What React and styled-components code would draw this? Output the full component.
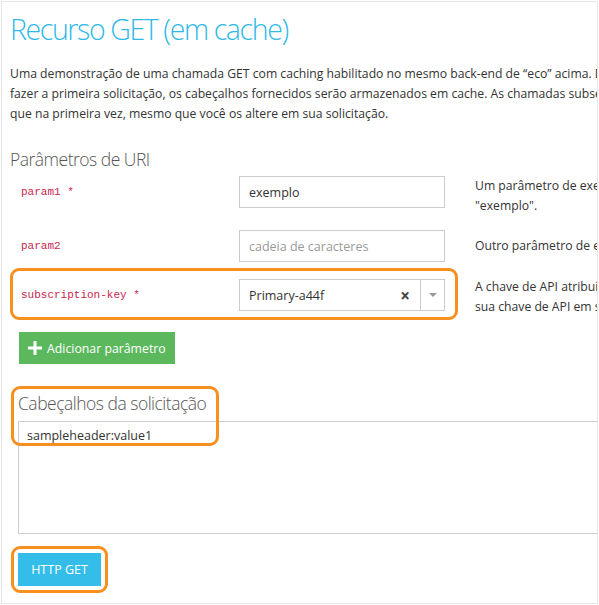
import React from 'react';
import styled, { createGlobalStyle } from 'styled-components';

const GlobalStyle = createGlobalStyle`
  body {
    margin: 0;
    background: #fff;
    font-family: "Segoe UI", "Open Sans", "Noto Sans", sans-serif;
    color: #333;
  }
`

const ORANGE = '#f7901e';

// ----styled components----
const Frame = styled.div` // outer card, content is wider than the shot and gets cut
  box-sizing: border-box;
  margin: 1px 0 0 1px;
  width: 597px;
  height: 603px;
  border: 1px solid #e6e6e6;
  overflow: hidden;
  padding: 0 0 0 8px;
`
const Title = styled.h1`
  margin: 9px 0 0 0;
  font-size: 28.5px;
  font-weight: 300;
  letter-spacing: -1.4px;
  line-height: 36px;
  color: #2fb9e8;
  white-space: nowrap;
`
const Intro = styled.p`
  margin: 17px 0 0 0;
  font-size: 12.2px;
  line-height: 20px;
  color: #333;
  white-space: nowrap;
`
const SectionTitle = styled.h2`
  margin: ${p => p.$top}px 0 0 0;
  font-size: 17.5px;
  font-weight: 300;
  letter-spacing: -0.5px;
  line-height: 26px;
  color: #555;
  white-space: nowrap;
`
const ParamTable = styled.div`
  display: flex;
  flex-direction: column;
  margin-top: 4px;
`
const ParamRow = styled.div`
  position: relative;
  display: flex;
  align-items: flex-start;
  padding-left: 11px;
  margin-top: ${p => p.$top}px;
`
const ParamName = styled.div`
  flex-shrink: 0;
  width: 218px;
  height: 32px;
  display: flex;
  align-items: center;
  font-family: "Liberation Mono", "DejaVu Sans Mono", monospace;
  font-size: 11px;
  color: #c7254e;
  white-space: nowrap;
`
const TextInput = styled.div`
  flex-shrink: 0;
  box-sizing: border-box;
  width: 206px;
  height: 32px;
  border: 1px solid #ccc;
  display: flex;
  align-items: center;
  padding: 0 9px;
  font-size: 12.5px;
  color: ${p => (p.$placeholder ? '#999' : '#333')};
  white-space: nowrap;
`
const SelectBox = styled(TextInput)`
  padding: 0 0 0 9px;
`
const SelectValue = styled.span`
  flex: 1;
`
const ClearMark = styled.span`
  width: 26px;
  text-align: center;
  font-size: 17px;
  font-weight: bold;
  color: #444;
  margin-right: 2px;
`
const ArrowCell = styled.span`
  width: 23px;
  height: 100%;
  border-left: 1px solid #ccc;
  display: flex;
  align-items: center;
  justify-content: center;
  &::after {
    content: '';
    border-left: 4px solid transparent;
    border-right: 4px solid transparent;
    border-top: 4px solid #999;
  }
`
const ParamDesc = styled.div`
  flex-shrink: 0;
  margin-left: 30px;
  margin-top: ${p => p.$shift || 0}px;
  font-size: 12.2px;
  line-height: 20px;
  color: #333;
  white-space: nowrap;
`
// orange annotation rings drawn over the screenshot
const Ring = styled.span`
  position: absolute;
  left: ${p => p.$l}px;
  top: ${p => p.$t}px;
  width: ${p => p.$w}px;
  height: ${p => p.$h}px;
  box-sizing: border-box;
  border: 3px solid ${ORANGE};
  border-radius: 9px;
  pointer-events: none;
`
const AddButton = styled.button`
  margin: 15px 0 0 9px;
  width: 156px;
  height: 32px;
  border: none;
  background: #5cb85c;
  color: #fff;
  font-family: inherit;
  font-size: 12.3px;
  display: flex;
  align-items: center;
  gap: 4px;
  padding: 0 0 0 8px;
  cursor: pointer;
`
const HeadersSection = styled.div`
  position: relative;
  margin-left: 8px;
`
const HeadersArea = styled.div`
  box-sizing: border-box;
  width: 720px;
  height: 113px;
  margin-top: 5px;
  border: 1px solid #ccc;
  padding: 4px 8px;
  font-size: 12.5px;
  line-height: 20px;
  color: #333;
`
const SendWrap = styled.div`
  position: relative;
  width: 83px;
  margin: 19px 0 0 8px;
`
const SendButton = styled.button`
  width: 83px;
  height: 33px;
  border: none;
  background: #35bde9;
  color: #fff;
  font-family: inherit;
  font-size: 12.5px;
  cursor: pointer;
`

const params = [
  { name: 'param1 *', value: 'exemplo', desc: ['Um parâmetro de exemplo obrigatório. O valor padrão é', '"exemplo".'], top: 0 },
  { name: 'param2', placeholder: 'cadeia de caracteres', desc: ['Outro parâmetro de exemplo, definido como opcional.'], top: 14, shift: 6 },
  { name: 'subscription-key *', select: 'Primary-a44f', desc: ['A chave de API atribuída à sua conta. Você pode encontrar', 'sua chave de API em seu perfil.'], top: 17, ring: true, shift: -2 },
];

const PlusIcon = () => (
  <svg width="16" height="16" viewBox="0 0 16 16">
    <path d="M8 1v14M1 8h14" stroke="#fff" strokeWidth="3" />
  </svg>
)

const App = () => {
  return (
    <Frame>
      <GlobalStyle />
      <Title>Recurso GET (em cache)</Title>
      <Intro>
        Uma demonstração de uma chamada GET com caching habilitado no mesmo back-end de “eco” acima. Depois de<br />
        fazer a primeira solicitação, os cabeçalhos fornecidos serão armazenados em cache. As chamadas subsequentes retornarão os mesmos cabeçalhos<br />
        que na primeira vez, mesmo que você os altere em sua solicitação.
      </Intro>

      <SectionTitle $top={22}>Parâmetros de URI</SectionTitle>
      <ParamTable>
        {params.map((p) => (
          <ParamRow key={p.name} $top={p.top}>
            <ParamName>{p.name}</ParamName>
            {p.select ? (
              <SelectBox>
                <SelectValue>{p.select}</SelectValue>
                <ClearMark>×</ClearMark>
                <ArrowCell />
              </SelectBox>
            ) : (
              <TextInput $placeholder={!p.value}>{p.value || p.placeholder}</TextInput>
            )}
            <ParamDesc $shift={p.shift}>
              {p.desc.map((d, i) => <div key={i}>{d}</div>)}
            </ParamDesc>
            {p.ring && <Ring $l={0} $t={-11} $w={448} $h={52} />}
          </ParamRow>
        ))}
      </ParamTable>

      <AddButton><PlusIcon />Adicionar parâmetro</AddButton>

      <HeadersSection>
        <SectionTitle $top={26}>Cabeçalhos da solicitação</SectionTitle>
        <HeadersArea>sampleheader:value1</HeadersArea>
        <Ring $l={-7} $t={-4} $w={208} $h={60} />
      </HeadersSection>

      <SendWrap>
        <SendButton>HTTP GET</SendButton>
        <Ring $l={-7} $t={-7} $w={97} $h={47} />
      </SendWrap>
    </Frame>
  )
}

export default App;
